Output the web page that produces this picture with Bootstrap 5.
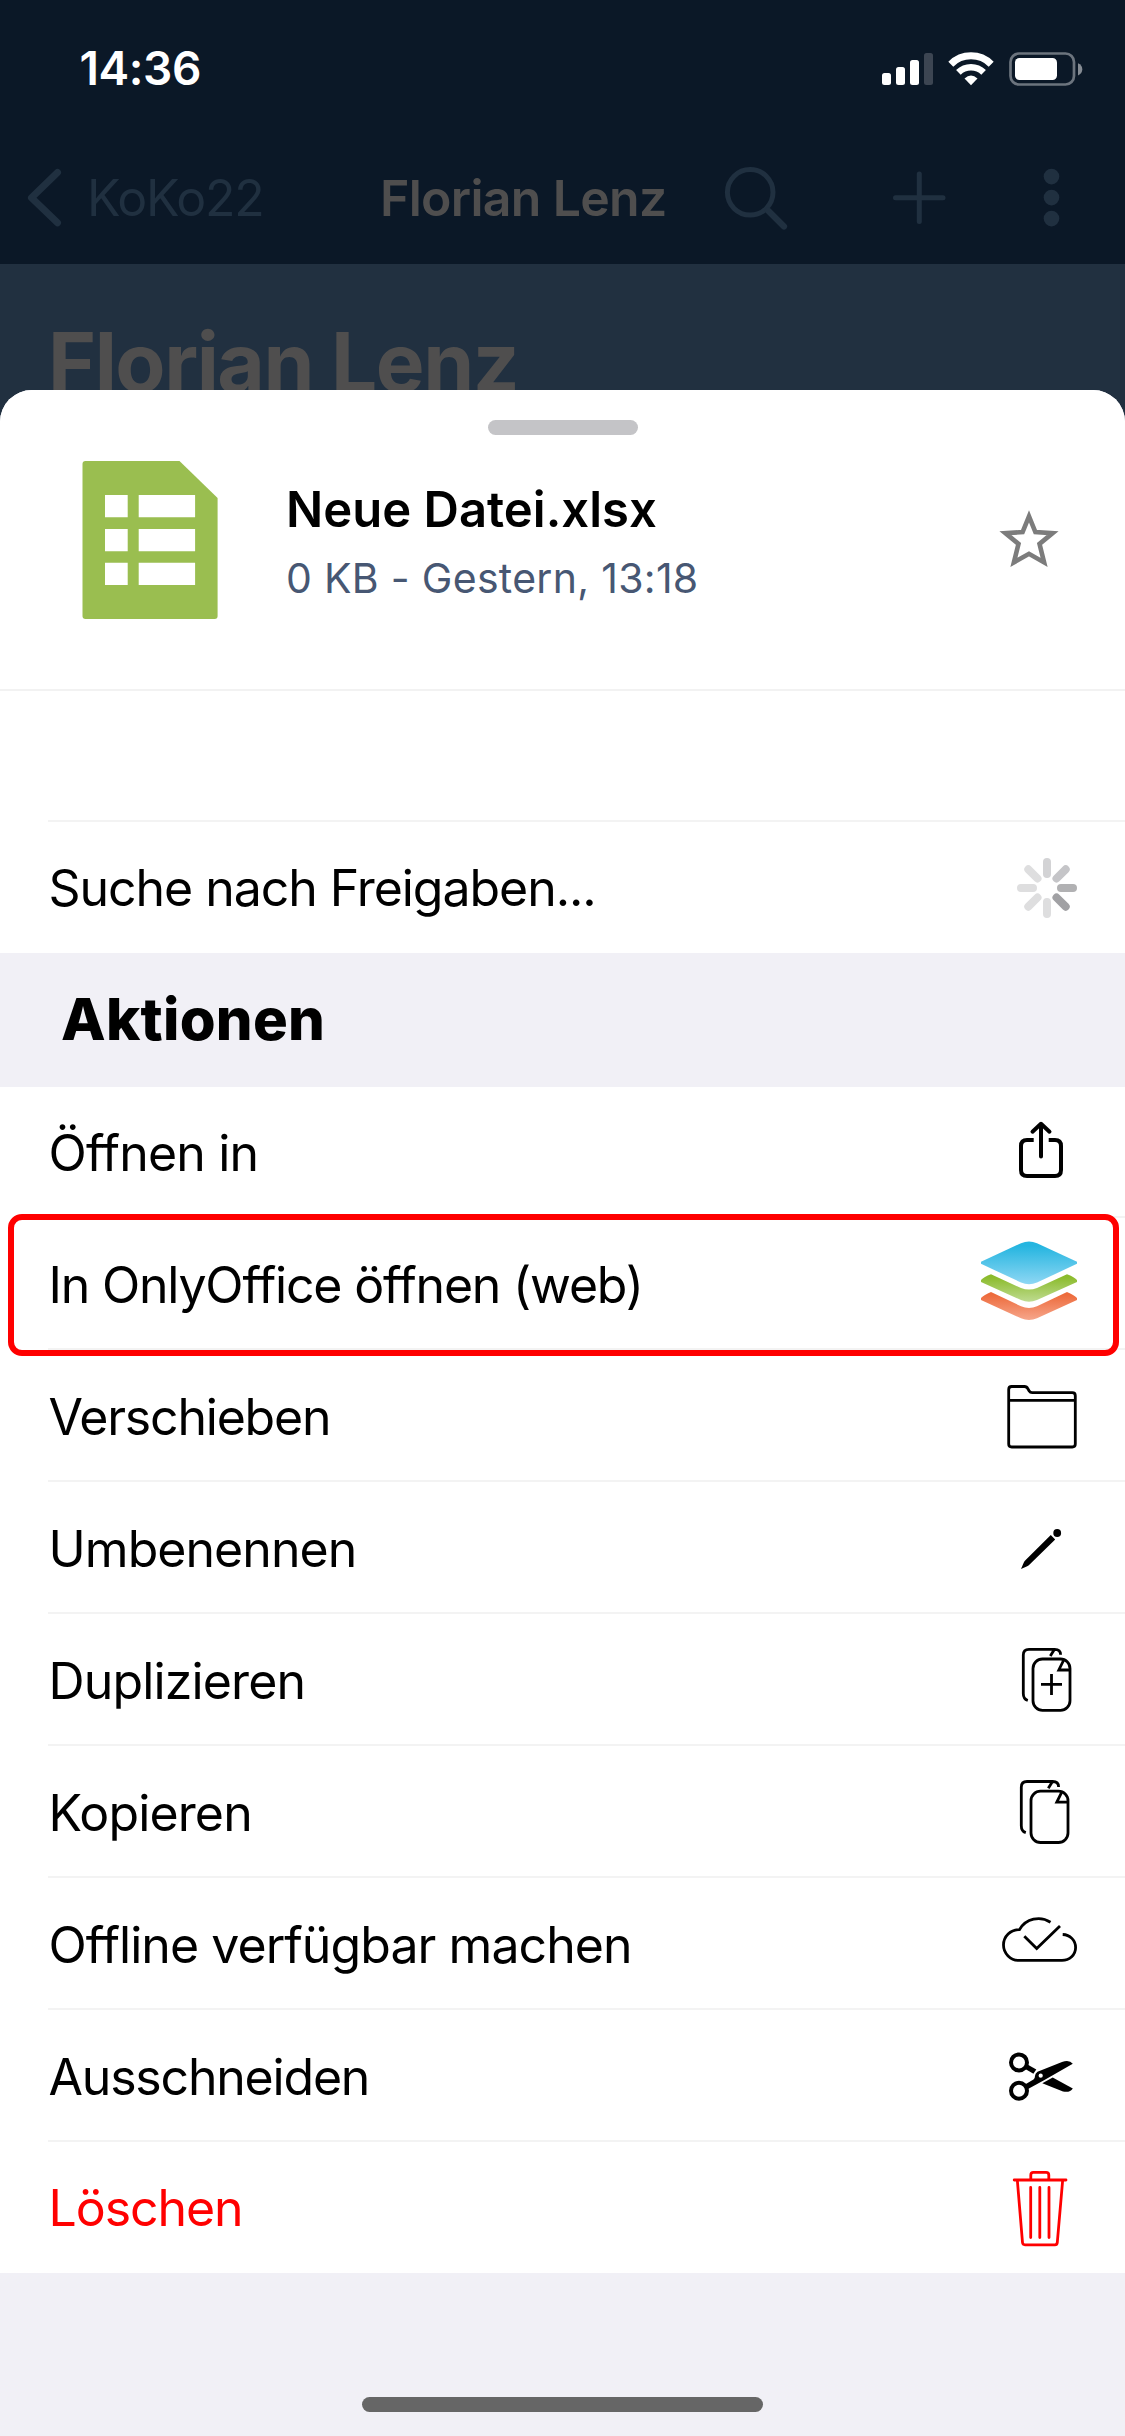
<!DOCTYPE html>
<html lang="de">
<head>
<meta charset="utf-8">
<meta name="viewport" content="width=device-width, initial-scale=1">
<title>Florian Lenz</title>
<link href="https://cdn.jsdelivr.net/npm/bootstrap@5.3.0/dist/css/bootstrap.min.css" rel="stylesheet">
<style>
  body { font-family: Inter, "Liberation Sans", sans-serif; background: #213040; color: #000; }
  .screen { width: 1125px; height: 2436px; }
  svg { display: block; flex: none; }

  .topbar { height: 264px; background: #0b1827; }
  .status { height: 136px; padding-left: 79.5px; }
  .clock { font-size: 46px; font-weight: 600; letter-spacing: -.38px; color: #fff; line-height: 137px; }
  .navrow { height: 124px; color: #203040; font-size: 50px; line-height: 124px; }
  .back-label { width: 293px; letter-spacing: -1.3px; }
  .nav-title { color: #4f4e4e; font-weight: 600; letter-spacing: -.7px; }

  .hero { height: 126px; background: #213040; padding-left: 48px; }
  .hero h1 { margin: 0; font-size: 82px; font-weight: 700; letter-spacing: -1.5px; line-height: 100px; padding-top: 49px; color: #4f4e4e; }

  .sheet { height: 2046px; background: #f1f0f6; border-radius: 32px 32px 0 0; }
  .filehead { height: 301px; background: #fff; border-bottom: 2px solid #f2f2f2; padding-top: 30px; }
  .grabber { width: 150px; height: 15px; border-radius: 8px; background: #c4c4c7; }
  .fileinfo { height: 158px; margin-top: 26px; padding-left: 82px; }
  .filetext { padding-top: 3px; }
  .filename { font-size: 49px; font-weight: 600; line-height: 60px; }
  .filemeta { font-size: 41px; letter-spacing: .3px; line-height: 52px; color: #475773; margin-top: 12px; }

  .line { height: 132px; background: #fff; padding-left: 48px; }
  .line > .inner { height: 100%; border-bottom: 2px solid #f3f3f3; }
  .line.edge { height: 131px; }
  .line.edge-last > .inner { border-bottom: 0; }
  .label { font-size: 50px; line-height: 132px; letter-spacing: -1.05px; padding: 1px 0 0 .5px; white-space: nowrap; }
  .edge .label { line-height: 130px; }
  .label.airy { letter-spacing: -.85px; }
  .label.wide-row { letter-spacing: -.94px; }
  .label.snug { letter-spacing: -1.2px; }
  .section { height: 134px; padding-left: 61px; font-size: 58px; font-weight: 800; letter-spacing: .26px; line-height: 133px; margin: 0; }
  .danger { color: #f00; }
  .marker { position: absolute; left: 8px; top: -4px; width: 1111px; height: 142px; border: 6px solid #f00; border-radius: 14px; z-index: 2; }
  .homebar { width: 401px; height: 15px; border-radius: 8px; background: #666; margin-top: 124px; }
</style>
</head>
<body>
<main class="screen overflow-hidden">

  <header class="topbar">
    <div class="status d-flex justify-content-between align-items-start">
      <span class="clock">14:36</span>
      <svg width="250" height="136" viewBox="875 0 250 136" fill="#fff">
        <rect x="882" y="73" width="9" height="12" rx="2.5"/>
        <rect x="896" y="67" width="9" height="18" rx="2.5"/>
        <rect x="910" y="60" width="9" height="25" rx="2.5"/>
        <rect x="924" y="53" width="9" height="32" rx="2.5" fill="#3c4552"/>
        <g fill="none" stroke="#fff">
          <path d="M950.8 64.2A28.6 28.6 0 0 1 991.2 64.2" stroke-width="7"/>
          <path d="M958.4 72.4A18 18 0 0 1 983.6 72.4" stroke-width="6.6"/>
        </g>
        <path d="M964.5 78.6Q971 72.2 977.5 78.6L971 85.3Z"/>
        <rect x="1010.5" y="53.5" width="63.5" height="31" rx="8.5" fill="none" stroke="#6c747e" stroke-width="2.7"/>
        <rect x="1015" y="58" width="42" height="22" rx="4.5"/>
        <path d="M1078 63.2Q1082.3 65 1082.3 69.3T1078 75.4Z" fill="#858b93"/>
      </svg>
    </div>
    <nav class="navrow d-flex">
      <svg width="87" height="124" viewBox="0 136 87 124"><path d="M57.5 172.5 31.5 197.7 57.5 222.8" fill="none" stroke="#203040" stroke-width="7" stroke-linecap="round" stroke-linejoin="round"/></svg>
      <span class="back-label">KoKo22</span>
      <span class="nav-title">Florian Lenz</span>
      <svg class="ms-auto" width="425" height="124" viewBox="700 136 425 124" fill="none" stroke="#203040" stroke-linecap="round">
        <circle cx="750.2" cy="192.3" r="22.8" stroke-width="5"/>
        <path d="M768 210.5 784 226.5" stroke-width="6.2"/>
        <path d="M895.5 197.7H943M919.3 174V221.5" stroke-width="5"/>
        <g fill="#203040" stroke="none"><circle cx="1051.5" cy="176.6" r="7.8"/><circle cx="1051.5" cy="197.6" r="7.8"/><circle cx="1051.5" cy="218.6" r="7.8"/></g>
      </svg>
    </nav>
  </header>

  <div class="hero overflow-hidden"><h1>Florian Lenz</h1></div>

  <section class="sheet overflow-hidden">
    <div class="filehead">
      <div class="grabber mx-auto"></div>
      <div class="fileinfo d-flex align-items-center">
        <svg width="204" height="158" viewBox="82 461 204 158">
          <path d="M85.5 461H179.5L217.6 498V616Q217.6 619 214.6 619H85.5Q82.5 619 82.5 616V464Q82.5 461 85.5 461Z" fill="#9abe50"/>
          <path d="M105 495h22.7v22.2H105zM138.7 495h56.4v22.2h-56.4zM105 529h22.7v22.2H105zM138.7 529h56.4v22.2h-56.4zM105 562.7h22.7v22.2H105zM138.7 562.7h56.4v22.2h-56.4z" fill="#fff"/>
        </svg>
        <div class="filetext">
          <div class="filename">Neue Datei.xlsx</div>
          <div class="filemeta">0 KB - Gestern, 13:18</div>
        </div>
        <svg class="ms-auto" width="145" height="158" viewBox="980 461 145 158"><path d="M1029 516.3 1035.4 532.1 1052.6 533.1 1039.5 543.9 1044.1 562.4 1029 553.8 1013.9 562.4 1018.5 543.9 1005.4 533.1 1022.6 532.1Z" fill="none" stroke="#7c7c7c" stroke-width="4.6" stroke-miterlimit="6"/></svg>
      </div>
    </div>

    <div class="line edge"><div class="inner"></div></div>
    <div class="line edge edge-last"><div class="inner d-flex justify-content-between">
      <span class="label">Suche nach Freigaben...</span>
      <svg width="160" height="131" viewBox="965 822 160 131" stroke-width="8" stroke-linecap="round">
        <path d="M1047 862V874" stroke="#d3d3d5"/>
        <path d="M1065.7 869.3 1056.5 878.5" stroke="#c5c5c8"/>
        <path d="M1061 888H1073" stroke="#b1b1b3"/>
        <path d="M1056.5 897.5 1065.7 906.7" stroke="#a1a1a4"/>
        <path d="M1047 902V914M1037.5 897.5 1028.3 906.7M1033 888H1021M1037.5 878.5 1028.3 869.3" stroke="#dededf"/>
      </svg>
    </div></div>

    <h2 class="section">Aktionen</h2>

    <div class="line edge"><div class="inner d-flex justify-content-between">
      <span class="label airy">Öffnen in</span>
      <svg width="160" height="129" viewBox="965 1087 160 129" fill="none" stroke="#000" stroke-width="4">
        <path d="M1033.7 1140H1027Q1021 1140 1021 1146V1170Q1021 1176 1027 1176H1055Q1061 1176 1061 1170V1146Q1061 1140 1055 1140H1048.7"/>
        <path d="M1041 1156.5V1124M1032.5 1131.7 1041 1123.8 1049.5 1131.7" stroke-linecap="round" stroke-linejoin="round"/>
      </svg>
    </div></div>

    <div class="line position-relative"><div class="inner d-flex justify-content-between">
      <span class="label snug">In OnlyOffice öffnen (web)</span>
      <svg width="160" height="130" viewBox="965 1218 160 130">
        <defs>
          <linearGradient id="blue" x1="0" y1="0" x2="0" y2="1"><stop offset=".1" stop-color="#25b5e0"/><stop offset="1" stop-color="#8ed7f4"/></linearGradient>
          <linearGradient id="green" x1="0" y1="0" x2="0" y2="1"><stop offset=".1" stop-color="#8bbb2c"/><stop offset="1" stop-color="#bedb90"/></linearGradient>
          <linearGradient id="orange" x1="0" y1="0" x2="0" y2="1"><stop offset=".1" stop-color="#ed6b3c"/><stop offset="1" stop-color="#f6a68b"/></linearGradient>
        </defs>
        <path d="M981 1298Q984 1295 991 1292L1021 1306.3Q1029 1309.5 1037 1306.3L1067 1292Q1074 1295 1077 1298V1300L1037 1318.3Q1029 1321.5 1021 1318.3L981 1300Z" fill="url(#orange)"/>
        <path d="M981 1280Q984 1277 991 1274.3L1021 1288Q1029 1291 1037 1288L1067 1274.3Q1074 1277 1077 1280V1282L1037 1300Q1029 1303.5 1021 1300L981 1282Z" fill="url(#green)"/>
        <path d="M981 1261.8 1021 1243.2Q1029 1240 1037 1243.2L1077 1261.8V1263.8L1037 1282.5Q1029 1286 1021 1282.5L981 1263.8Z" fill="url(#blue)"/>
      </svg>
    </div><div class="marker"></div></div>

    <div class="line"><div class="inner d-flex justify-content-between">
      <span class="label snug">Verschieben</span>
      <svg width="160" height="130" viewBox="965 1350 160 130" fill="none" stroke="#000" stroke-width="2.8" stroke-linejoin="round">
        <path d="M1008.7 1389.5Q1008.7 1386.5 1011.7 1386.5H1024.5Q1026.8 1386.5 1028 1389L1029.2 1391Q1030.2 1392.7 1032.2 1392.7H1072.3Q1075.3 1392.7 1075.3 1395.7V1444Q1075.3 1447 1072.3 1447H1011.7Q1008.7 1447 1008.7 1444ZM1008.7 1400.4H1075.3"/>
      </svg>
    </div></div>

    <div class="line"><div class="inner d-flex justify-content-between">
      <span class="label wide-row">Umbenennen</span>
      <svg width="160" height="130" viewBox="965 1482 160 130">
        <path d="M1021 1569 1023.8 1562.6Q1024.4 1561.3 1025.4 1560.3L1050.8 1535 1055.2 1539.4 1029.6 1564.6Q1028.6 1565.6 1027.2 1566.2Z"/>
        <circle cx="1057.2" cy="1533" r="3.9"/>
      </svg>
    </div></div>

    <div class="line"><div class="inner d-flex justify-content-between">
      <span class="label airy">Duplizieren</span>
      <svg width="160" height="130" viewBox="965 1614 160 130" fill="none" stroke="#000" stroke-width="2.8">
        <g id="pages">
          <path d="M1027.8 1700.5Q1023.3 1699 1023.3 1693.5V1655Q1023.3 1649.3 1029 1649.3H1054.7Q1060.6 1649.3 1060.6 1654.8M1054.5 1649.3 1050.3 1656"/>
          <rect x="1033" y="1659" width="37" height="51.3" rx="9.5"/>
          <path d="M1064 1659.5 1058.8 1670H1070"/>
        </g>
        <path d="M1041 1684.4H1062M1051.5 1674V1695"/>
      </svg>
    </div></div>

    <div class="line"><div class="inner d-flex justify-content-between">
      <span class="label airy">Kopieren</span>
      <svg width="160" height="130" viewBox="965 1746 160 130" fill="none" stroke="#000" stroke-width="2.8"><use href="#pages" x="-2" y="132.2"/></svg>
    </div></div>

    <div class="line"><div class="inner d-flex justify-content-between">
      <span class="label wide-row">Offline verfügbar machen</span>
      <svg width="160" height="130" viewBox="965 1878 160 130" fill="none" stroke="#000" stroke-width="2.8">
        <path d="M1050.5 1922.2C1040 1915.5 1026 1918.5 1019.5 1929.6 1010.5 1929.4 1003.5 1936.5 1003.5 1945S1010.5 1960.4 1019 1960.4H1062C1069.6 1960.4 1075.6 1954.8 1075.6 1947.5S1070 1934.8 1062.7 1934.5"/>
        <path d="M1024.3 1936.2 1036.7 1948.6 1060 1926"/>
      </svg>
    </div></div>

    <div class="line"><div class="inner d-flex justify-content-between">
      <span class="label snug">Ausschneiden</span>
      <svg width="160" height="130" viewBox="965 2010 160 130">
        <circle cx="1019" cy="2062.4" r="8" fill="none" stroke="#000" stroke-width="4"/>
        <circle cx="1019" cy="2090.8" r="8" fill="none" stroke="#000" stroke-width="4"/>
        <path d="M1027.5 2064.5 1036.3 2069.5 1033.4 2073.8 1025.3 2069Z"/>
        <path d="M1025 2084.5 1033.5 2079.5Q1035 2078.3 1035 2076 1035 2073.5 1037.5 2071.8L1062 2062Q1069.5 2059.5 1072.8 2063.8L1044 2080.3 1028 2089Z"/>
        <path d="M1052.7 2077.5 1072.8 2088.4Q1070 2093 1063 2091.5L1042.3 2083.3Z"/>
        <circle cx="1040.7" cy="2075.7" r="2.1" fill="#fff"/>
      </svg>
    </div></div>

    <div class="line edge edge-last"><div class="inner d-flex justify-content-between">
      <span class="label danger">Löschen</span>
      <svg width="160" height="131" viewBox="965 2142 160 131" fill="none" stroke="#f00" stroke-width="2.8" stroke-linecap="round" stroke-linejoin="round">
        <path d="M1014.2 2180H1066M1030.8 2179.5V2175Q1030.8 2172.4 1033.4 2172.4H1046Q1048.8 2172.4 1048.8 2175V2179.5M1017.4 2181 1022.5 2242.5Q1022.7 2244.8 1025 2244.8H1055Q1057 2244.8 1057.3 2242.5L1062.6 2181M1030.7 2187.5V2237.5M1039.8 2187.5V2237.5M1049 2187.5V2237.5"/>
      </svg>
    </div></div>

    <div class="homebar mx-auto"></div>
  </section>
</main>
<script src="https://cdn.jsdelivr.net/npm/bootstrap@5.3.0/dist/js/bootstrap.bundle.min.js"></script>
</body>
</html>
